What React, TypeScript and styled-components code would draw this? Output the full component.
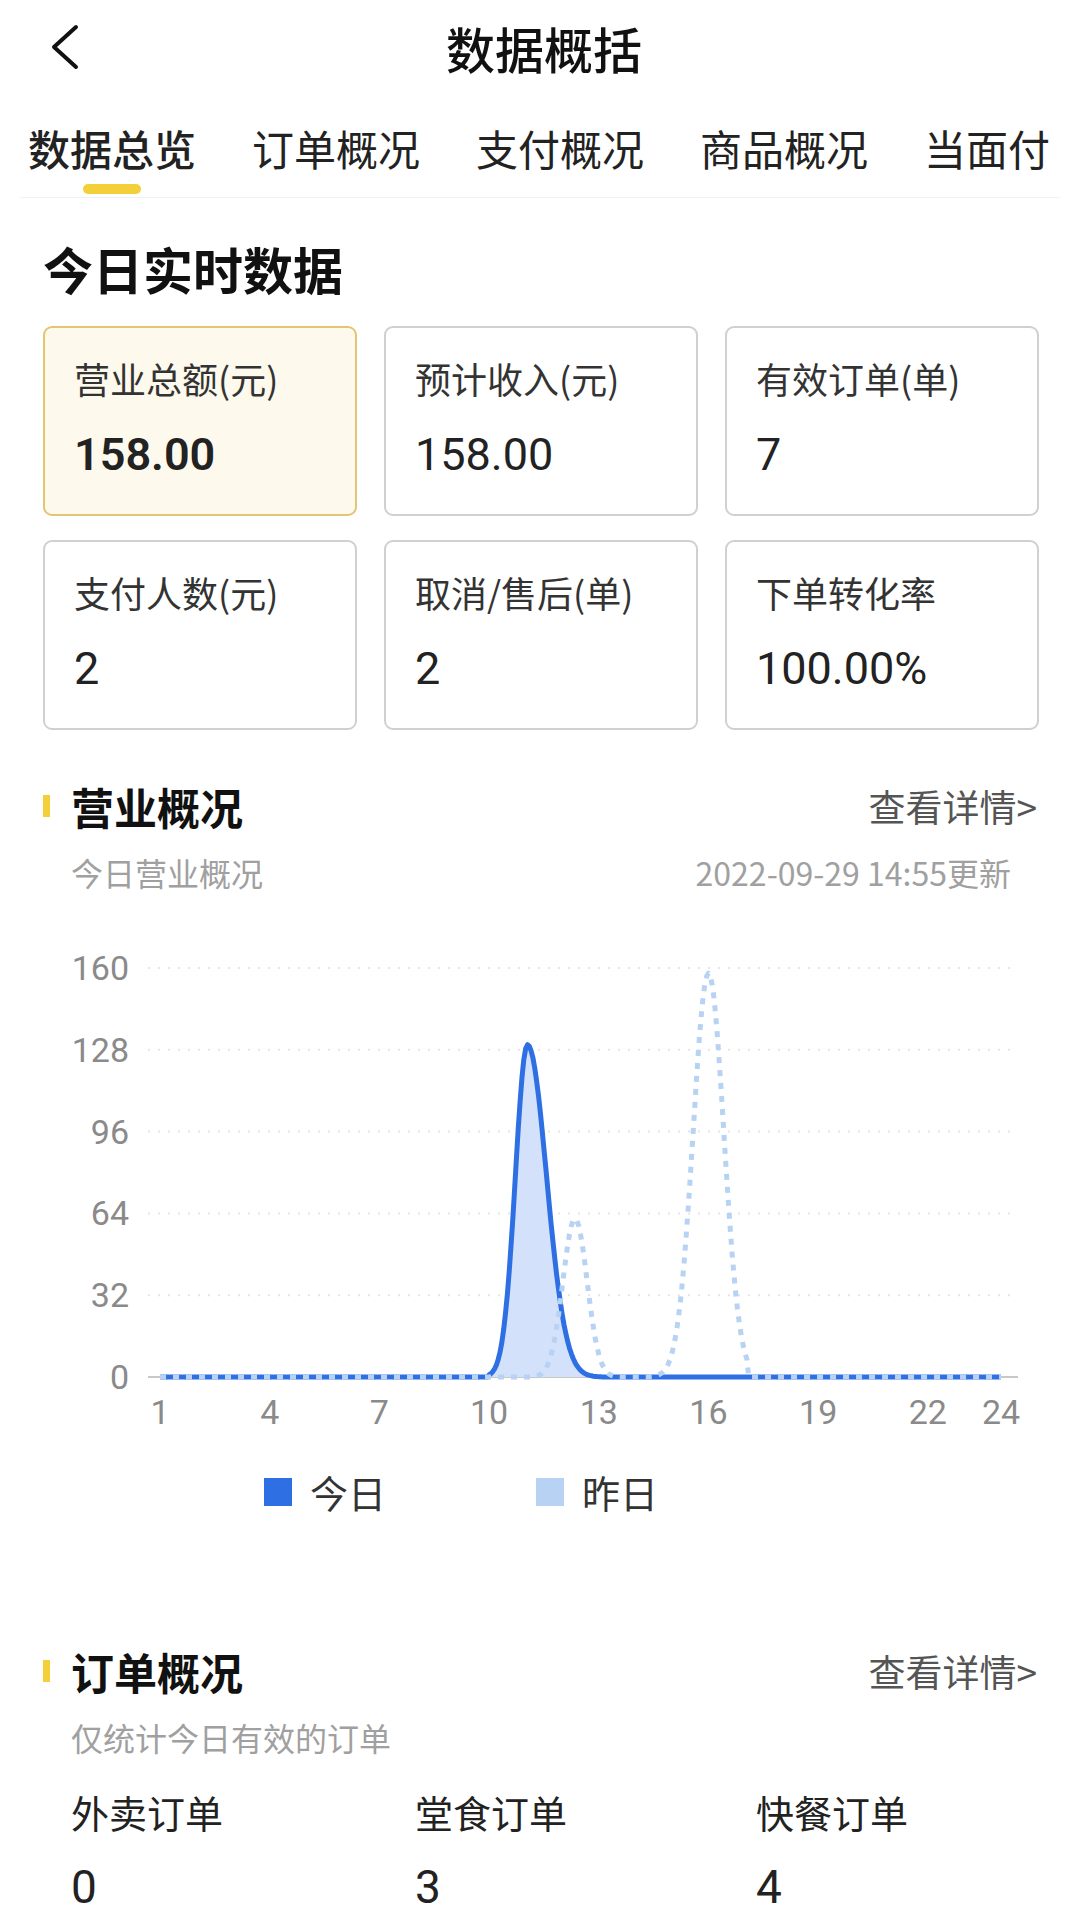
import React from "react";
import styled, { createGlobalStyle } from "styled-components";

const GlobalStyle = createGlobalStyle`
  html, body { margin: 0; padding: 0; background: #fff; }
  body {
    width: 1080px;
    height: 1920px;
    overflow: hidden;
    font-family: "Noto Sans CJK SC", "Noto Sans", sans-serif;
    color: #222;
  }
`;

const TABS = ["数据总览", "订单概况", "支付概况", "商品概况", "当面付"];

const CARDS = [
  { label: "营业总额(元)", value: "158.00", active: true },
  { label: "预计收入(元)", value: "158.00" },
  { label: "有效订单(单)", value: "7" },
  { label: "支付人数(元)", value: "2" },
  { label: "取消/售后(单)", value: "2" },
  { label: "下单转化率", value: "100.00%" },
];

const ORDERS = [
  { label: "外卖订单", value: "0" },
  { label: "堂食订单", value: "3" },
  { label: "快餐订单", value: "4" },
];

// chart geometry (svg coords)
const X0 = 160;
const X1 = 1001;
const Y0 = 447;
const YTOP = 38;
const xOf = (h: number) => X0 + ((h - 1) * (X1 - X0)) / 23;
const yOf = (v: number) => Y0 - (v / 160) * (Y0 - YTOP);
const gauss = (h: number, c: number, s: number) => Math.exp(-((h - c) ** 2) / (2 * s * s));

const today = (h: number) => {
  if (h < 10 || h > 13.3) return 0;
  return 130 * gauss(h, 11.05, h < 11.05 ? 0.33 : 0.52);
};
const yesterday = (h: number) => {
  if (h < 10.5 || h > 17.1) return 0;
  return 62 * gauss(h, 12.35, 0.33) + 158 * gauss(h, 16, 0.42);
};

const buildPath = (fn: (h: number) => number) => {
  const pts: string[] = [];
  for (let h = 1; h <= 24.001; h += 0.05) {
    pts.push(`${xOf(h).toFixed(1)},${yOf(fn(h)).toFixed(1)}`);
  }
  return "M" + pts.join(" L");
};

const todayPath = buildPath(today);
const yesterdayPath = buildPath(yesterday);
const todayArea = todayPath + ` L${xOf(24)},${Y0} L${xOf(1)},${Y0} Z`;

export default function App() {
  return (
    <Page>
      <GlobalStyle />
      <Header>
        <BackButton>
          <svg width="34" height="46" viewBox="0 0 34 46">
            <path d="M28 3 L6 23 L28 43" fill="none" stroke="#111" strokeWidth="4" strokeLinecap="round" strokeLinejoin="round" />
          </svg>
        </BackButton>
        <Title>数据概括</Title>
      </Header>

      <TabBar>
        {TABS.map((t, i) => (
          <Tab key={t} $active={i === 0}>
            {t}
          </Tab>
        ))}
      </TabBar>

      <Content>
        <BigTitle>今日实时数据</BigTitle>
        <CardGrid>
          {CARDS.map((c) => (
            <Card key={c.label} $active={!!c.active}>
              <CardLabel>{c.label}</CardLabel>
              <CardValue $active={!!c.active}>{c.value}</CardValue>
            </Card>
          ))}
        </CardGrid>

        <SectionHead>
          <SectionTitle>营业概况</SectionTitle>
          <More>查看详情&gt;</More>
        </SectionHead>
        <SubRow>
          <Sub>今日营业概况</Sub>
          <Sub>2022-09-29 14:55更新</Sub>
        </SubRow>
      </Content>

      <Chart width="1080" height="500" viewBox="0 0 1080 500">
        {[160, 128, 96, 64, 32].map((v) => (
          <line key={v} x1={148} x2={1010} y1={yOf(v)} y2={yOf(v)} stroke="#e6e6e6" strokeWidth="2" strokeDasharray="2 8" />
        ))}
        <line x1={148} x2={1018} y1={Y0} y2={Y0} stroke="#c8c8c8" strokeWidth="2" />
        {[160, 128, 96, 64, 32, 0].map((v) => (
          <text key={v} x={129} y={yOf(v) + 12} textAnchor="end" fontSize="34" fill="#8a8a8a" fontFamily="Roboto, sans-serif">
            {v}
          </text>
        ))}
        {[1, 4, 7, 10, 13, 16, 19, 22, 24].map((h) => (
          <text key={h} x={xOf(h)} y={494} textAnchor="middle" fontSize="34" fill="#8a8a8a" fontFamily="Roboto, sans-serif">
            {h}
          </text>
        ))}
        <path d={todayArea} fill="#d3e2fa" />
        <path d={todayPath} fill="none" stroke="#2e6fe3" strokeWidth="5" strokeLinejoin="round" />
        <path d={yesterdayPath} fill="none" stroke="#b8d2f3" strokeWidth="5" strokeDasharray="6 7" strokeLinejoin="round" />
      </Chart>

      <Legend>
        <LegendItem>
          <Swatch $color="#2e6fe3" />
          今日
        </LegendItem>
        <LegendItem>
          <Swatch $color="#b8d2f3" />
          昨日
        </LegendItem>
      </Legend>

      <Content>
        <SectionHead $top={122}>
          <SectionTitle>订单概况</SectionTitle>
          <More>查看详情&gt;</More>
        </SectionHead>
        <SubRow>
          <Sub>仅统计今日有效的订单</Sub>
        </SubRow>
        <OrderGrid>
          {ORDERS.map((o) => (
            <OrderCell key={o.label}>
              <OrderLabel>{o.label}</OrderLabel>
              <OrderValue>{o.value}</OrderValue>
            </OrderCell>
          ))}
        </OrderGrid>
      </Content>
    </Page>
  );
}

const Page = styled.div`
  width: 1080px;
  height: 1920px;
  overflow: hidden;
  background: #fff;
`;

const Header = styled.div`
  position: relative;
  height: 94px;
  display: flex;
  align-items: center;
  justify-content: center;
`;

const BackButton = styled.div`
  position: absolute;
  left: 48px;
  top: 24px;
  display: flex;
`;

const Title = styled.div`
  font-size: 49px;
  font-weight: 500;
  color: #111;
  margin-left: 8px;
`;

const TabBar = styled.div`
  height: 104px;
  margin: 0 20px;
  border-bottom: 1px solid #f2f2f2;
  display: flex;
  align-items: flex-start;
  gap: 56px;
  padding-left: 8px;
  box-sizing: border-box;
  white-space: nowrap;
  overflow: hidden;
`;

const Tab = styled.div<{ $active: boolean }>`
  position: relative;
  font-size: 42px;
  line-height: 58px;
  margin-top: 25px;
  color: #222;
  font-weight: ${({ $active }) => ($active ? 500 : 400)};

  &::after {
    content: "";
    display: ${({ $active }) => ($active ? "block" : "none")};
    position: absolute;
    left: 55px;
    top: 65px;
    width: 58px;
    height: 10px;
    border-radius: 5px;
    background: #f3cf3a;
  }
`;

const Content = styled.div`
  padding: 0 43px;
`;

const BigTitle = styled.div`
  font-size: 50px;
  font-weight: 700;
  color: #111;
  line-height: 64px;
  margin-top: 38px;
`;

const CardGrid = styled.div`
  display: grid;
  grid-template-columns: repeat(3, 314px);
  column-gap: 27px;
  row-gap: 24px;
  margin-top: 26px;
`;

const Card = styled.div<{ $active: boolean }>`
  height: 190px;
  box-sizing: border-box;
  border-radius: 9px;
  border: 2px solid ${({ $active }) => ($active ? "#e3c674" : "#d0d0d0")};
  background: ${({ $active }) => ($active ? "#fdf9ec" : "#fff")};
  padding: 26px 0 0 29px;
`;

const CardLabel = styled.div`
  font-size: 36px;
  line-height: 48px;
  color: #333;
`;

const CardValue = styled.div<{ $active: boolean }>`
  font-family: Roboto, "Noto Sans", sans-serif;
  font-size: 45px;
  line-height: 54px;
  margin-top: 26px;
  color: #222;
  font-weight: ${({ $active }) => ($active ? 600 : 400)};
`;

const SectionHead = styled.div<{ $top?: number }>`
  display: flex;
  align-items: center;
  justify-content: space-between;
  margin-top: ${({ $top }) => $top ?? 46}px;
  height: 60px;
`;

const SectionTitle = styled.div`
  position: relative;
  font-size: 43px;
  font-weight: 700;
  color: #111;
  padding-left: 28px;

  &::before {
    content: "";
    position: absolute;
    left: 0;
    top: 50%;
    width: 7px;
    height: 22px;
    margin-top: -11px;
    background: #f3cf3a;
  }
`;

const More = styled.div`
  font-size: 37px;
  color: #555;
`;

const SubRow = styled.div`
  display: flex;
  justify-content: space-between;
  padding: 0 26px 0 28px;
  margin-top: 14px;
`;

const Sub = styled.div`
  font-size: 32px;
  line-height: 44px;
  color: #a0a0a0;
`;

const Chart = styled.svg`
  display: block;
  margin-top: 36px;
`;

const Legend = styled.div`
  display: flex;
  gap: 150px;
  padding-left: 264px;
  margin-top: 34px;
`;

const LegendItem = styled.div`
  display: flex;
  align-items: center;
  gap: 18px;
  font-size: 38px;
  color: #333;
`;

const Swatch = styled.span<{ $color: string }>`
  width: 28px;
  height: 28px;
  background: ${({ $color }) => $color};
`;

const OrderGrid = styled.div`
  display: grid;
  grid-template-columns: 344px 341px 1fr;
  padding-left: 28px;
  margin-top: 28px;
`;

const OrderCell = styled.div``;

const OrderLabel = styled.div`
  font-size: 38px;
  line-height: 50px;
  color: #222;
`;

const OrderValue = styled.div`
  font-family: Roboto, sans-serif;
  font-size: 46px;
  line-height: 56px;
  margin-top: 22px;
  color: #222;
`;
